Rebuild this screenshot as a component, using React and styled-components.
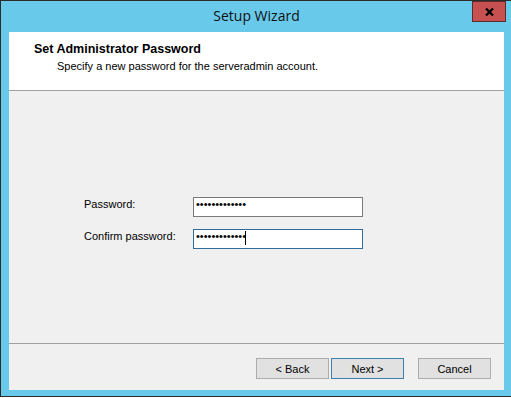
import React from 'react';
import styled, { createGlobalStyle } from 'styled-components';

const GlobalStyle = createGlobalStyle`
  html, body {
    margin: 0;
    padding: 0;
    overflow: hidden;
    background: #ffffff;
  }
  * {
    box-sizing: border-box;
  }
`;

const Window = styled.div`
  display: flex;
  flex-direction: column;
  width: 513px;
  height: 397px;
  background: #69c9eb;
  border: 1px solid #2b2b2b;
  font-family: "Liberation Sans", Arial, sans-serif;
  color: #000;
`;

const TitleBar = styled.div`
  display: grid;
  grid-template-columns: 1fr auto 1fr;
  height: 31px;
  flex-shrink: 0;
`;

const Title = styled.div`
  grid-column: 2;
  padding-top: 5px;
  font-family: "Open Sans", sans-serif;
  font-size: 14px;
  line-height: 20px;
  color: #111;
`;

const CloseButton = styled.div`
  grid-column: 3;
  justify-self: end;
  display: flex;
  align-items: center;
  justify-content: center;
  width: 34px;
  height: 21px;
  margin: 0 6px 0 0;
  background: #c75050;
  border: 1px solid #5b2a2a;
`;

const Client = styled.div`
  flex: 1;
  display: flex;
  flex-direction: column;
  margin: 0 8px 6px 8px;
  background: #f0f0f0;
`;

const Header = styled.div`
  height: 59px;
  flex-shrink: 0;
  padding: 10px 0 0 25px;
  background: #ffffff;
  border-bottom: 1px solid #a0a0a0;
`;

const HeaderTitle = styled.div`
  font-size: 12.5px;
  font-weight: bold;
  line-height: 15px;
`;

const HeaderText = styled.div`
  margin: 3px 0 0 23px;
  font-size: 11px;
  line-height: 13px;
`;

const Body = styled.div`
  flex: 1;
  padding: 106px 0 0 75px;
`;

const Form = styled.div`
  display: grid;
  grid-template-columns: 109px 170px;
  row-gap: 12px;
`;

const Label = styled.div`
  padding-top: 1px;
  font-size: 11px;
  line-height: 13px;
`;

const Field = styled.div`
  height: 20px;
  padding: 0 0 0 2px;
  background: #ffffff;
  border: 1px solid ${p => (p.focused ? '#336b9b' : '#7a7a7a')};
  font-family: "Liberation Sans", Arial, sans-serif;
  font-size: 11px;
  line-height: 12px;
  white-space: nowrap;
`;

const Caret = styled.span`
  display: inline-block;
  width: 1px;
  height: 14px;
  margin-left: -1px;
  background: #000;
  vertical-align: top;
  margin-top: 1px;
`;

const Footer = styled.div`
  display: flex;
  justify-content: flex-end;
  flex-shrink: 0;
  padding: 14px 13px 11px 0;
  border-top: 1px solid #a0a0a0;
`;

const Button = styled.div`
  display: flex;
  align-items: center;
  justify-content: center;
  width: 73px;
  height: 21px;
  margin-left: ${p => p.gap}px;
  background: #e1e1e1;
  border: 1px solid ${p => (p.primary ? '#3c7fb1' : '#adadad')};
  font-size: 11px;
`;

const dots = '\u2022'.repeat(13);

export default function App() {
  return (
    <>
      <GlobalStyle />
      <Window>
        <TitleBar>
          <Title>Setup Wizard</Title>
          <CloseButton>
            <svg width="9" height="8" viewBox="0 0 9 8">
              <path d="M1 0.5 L8 7.5 M8 0.5 L1 7.5" stroke="#000" strokeWidth="2.2" />
            </svg>
          </CloseButton>
        </TitleBar>
        <Client>
          <Header>
            <HeaderTitle>Set Administrator Password</HeaderTitle>
            <HeaderText>Specify a new password for the serveradmin account.</HeaderText>
          </Header>
          <Body>
            <Form>
              <Label>Password:</Label>
              <Field>{dots}</Field>
              <Label>Confirm password:</Label>
              <Field focused>
                {dots}
                <Caret />
              </Field>
            </Form>
          </Body>
          <Footer>
            <Button gap={0}>&lt; Back</Button>
            <Button gap={2} primary>Next &gt;</Button>
            <Button gap={14}>Cancel</Button>
          </Footer>
        </Client>
      </Window>
    </>
  );
}
